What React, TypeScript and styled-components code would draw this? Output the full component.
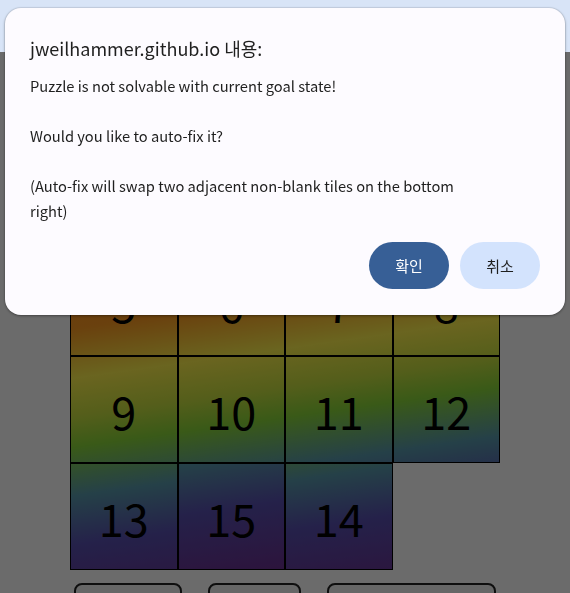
import React from "react";
import styled, { createGlobalStyle } from "styled-components";

const GlobalStyle = createGlobalStyle`
  html, body { margin: 0; padding: 0; background: #ffffff; }
  body { font-family: "Noto Sans", "Noto Sans CJK KR", sans-serif; overflow: hidden; }
`;

const Page = styled.div`
  width: 570px;
  height: 593px;
  padding: 142px 0 0 70px;
  box-sizing: border-box;
`;

const Board = styled.div`
  display: grid;
  grid-template-columns: repeat(4, 107.5px);
  grid-auto-rows: 107px;
  width: 430px;
`;

const Tile = styled.div<{ $col: number; $row: number }>`
  box-sizing: border-box;
  border: 1px solid #000;
  display: flex;
  align-items: center;
  justify-content: center;
  font-family: "Noto Sans CJK KR", "Noto Sans", sans-serif;
  font-size: 45px;
  color: #000;
  padding-top: 1px;
  background-image: linear-gradient(
    172deg,
    #ff3a30 0%,
    #ff7a1c 22%,
    #fc9b22 38%,
    #fdf04c 48%,
    #c8e040 56%,
    #8ad639 62%,
    #5a9aac 72%,
    #5850b0 82%,
    #6a3090 96%,
    #6a2c88 100%
  );
  background-size: 430px 430px;
  background-position: ${(p) => `${-p.$col * 107.5}px ${-p.$row * 107}px`};
`;

const Empty = styled.div``;

const Controls = styled.div`
  display: flex;
  gap: 26px;
  margin: 13px 0 0 4px;
`;

const CtrlButton = styled.button<{ $w: number }>`
  width: ${(p) => p.$w}px;
  height: 40px;
  box-sizing: border-box;
  border: 2px solid #222;
  border-radius: 8px;
  background: #f3f3f3;
  font-family: "Noto Sans", sans-serif;
  font-size: 16px;
  padding: 0;
  color: transparent;
`;

const Backdrop = styled.div`
  position: fixed;
  inset: 0;
  display: flex;
  flex-direction: column;
`;

const TopBand = styled.div`
  height: 52px;
  background: #d8e4f7;
`;

const Dim = styled.div`
  flex: 1;
  background: rgba(0, 0, 0, 0.58);
`;

const Dialog = styled.div`
  position: fixed;
  top: 8px;
  left: 5px;
  width: 560px;
  box-sizing: border-box;
  background: #fdfbff;
  border-radius: 16px;
  box-shadow: 0 1px 3px rgba(0, 0, 0, 0.35), 0 0 0 1px rgba(0, 0, 0, 0.06);
  padding: 26px 25px 26px 25px;
  color: #1f1f1f;
  font-family: "Noto Sans CJK KR", "Noto Sans", sans-serif;
`;

const Title = styled.div`
  font-size: 18px;
  line-height: 28px;
  margin-bottom: 11px;
`;

const Message = styled.div`
  font-size: 14.7px;
  line-height: 25px;
  white-space: pre-wrap;
  max-width: 445px;
`;

const Actions = styled.div`
  display: flex;
  justify-content: flex-end;
  gap: 11px;
  margin-top: 19px;
`;

const DialogButton = styled.button<{ $primary?: boolean }>`
  width: 80px;
  height: 47px;
  border: none;
  border-radius: 24px;
  font-family: "Noto Sans CJK KR", sans-serif;
  font-size: 15px;
  background: ${(p) => (p.$primary ? "#375f96" : "#d3e3fd")};
  color: ${(p) => (p.$primary ? "#ffffff" : "#1f1f1f")};
  padding: 0;
`;

const layout: (number | null)[] = [1, 2, 3, 4, 5, 6, 7, 8, 9, 10, 11, 12, 13, 15, 14, null];

export default function App() {
  return (
    <>
      <GlobalStyle />
      <Page>
        <Board>
          {layout.map((n, i) =>
            n === null ? (
              <Empty key={i} />
            ) : (
              <Tile key={i} $col={(n - 1) % 4} $row={Math.floor((n - 1) / 4)}>
                {n}
              </Tile>
            )
          )}
        </Board>
        <Controls>
          <CtrlButton $w={108} aria-label="Shuffle" />
          <CtrlButton $w={93} aria-label="Solve" />
          <CtrlButton $w={169} aria-label="Set Goal" />
        </Controls>
      </Page>
      <Backdrop>
        <TopBand />
        <Dim />
      </Backdrop>
      <Dialog role="dialog">
        <Title>jweilhammer.github.io 내용:</Title>
        <Message>
          {"Puzzle is not solvable with current goal state!\n\nWould you like to auto-fix it?\n\n(Auto-fix will swap two adjacent non-blank tiles on the bottom right)"}
        </Message>
        <Actions>
          <DialogButton $primary>확인</DialogButton>
          <DialogButton>취소</DialogButton>
        </Actions>
      </Dialog>
    </>
  );
}
